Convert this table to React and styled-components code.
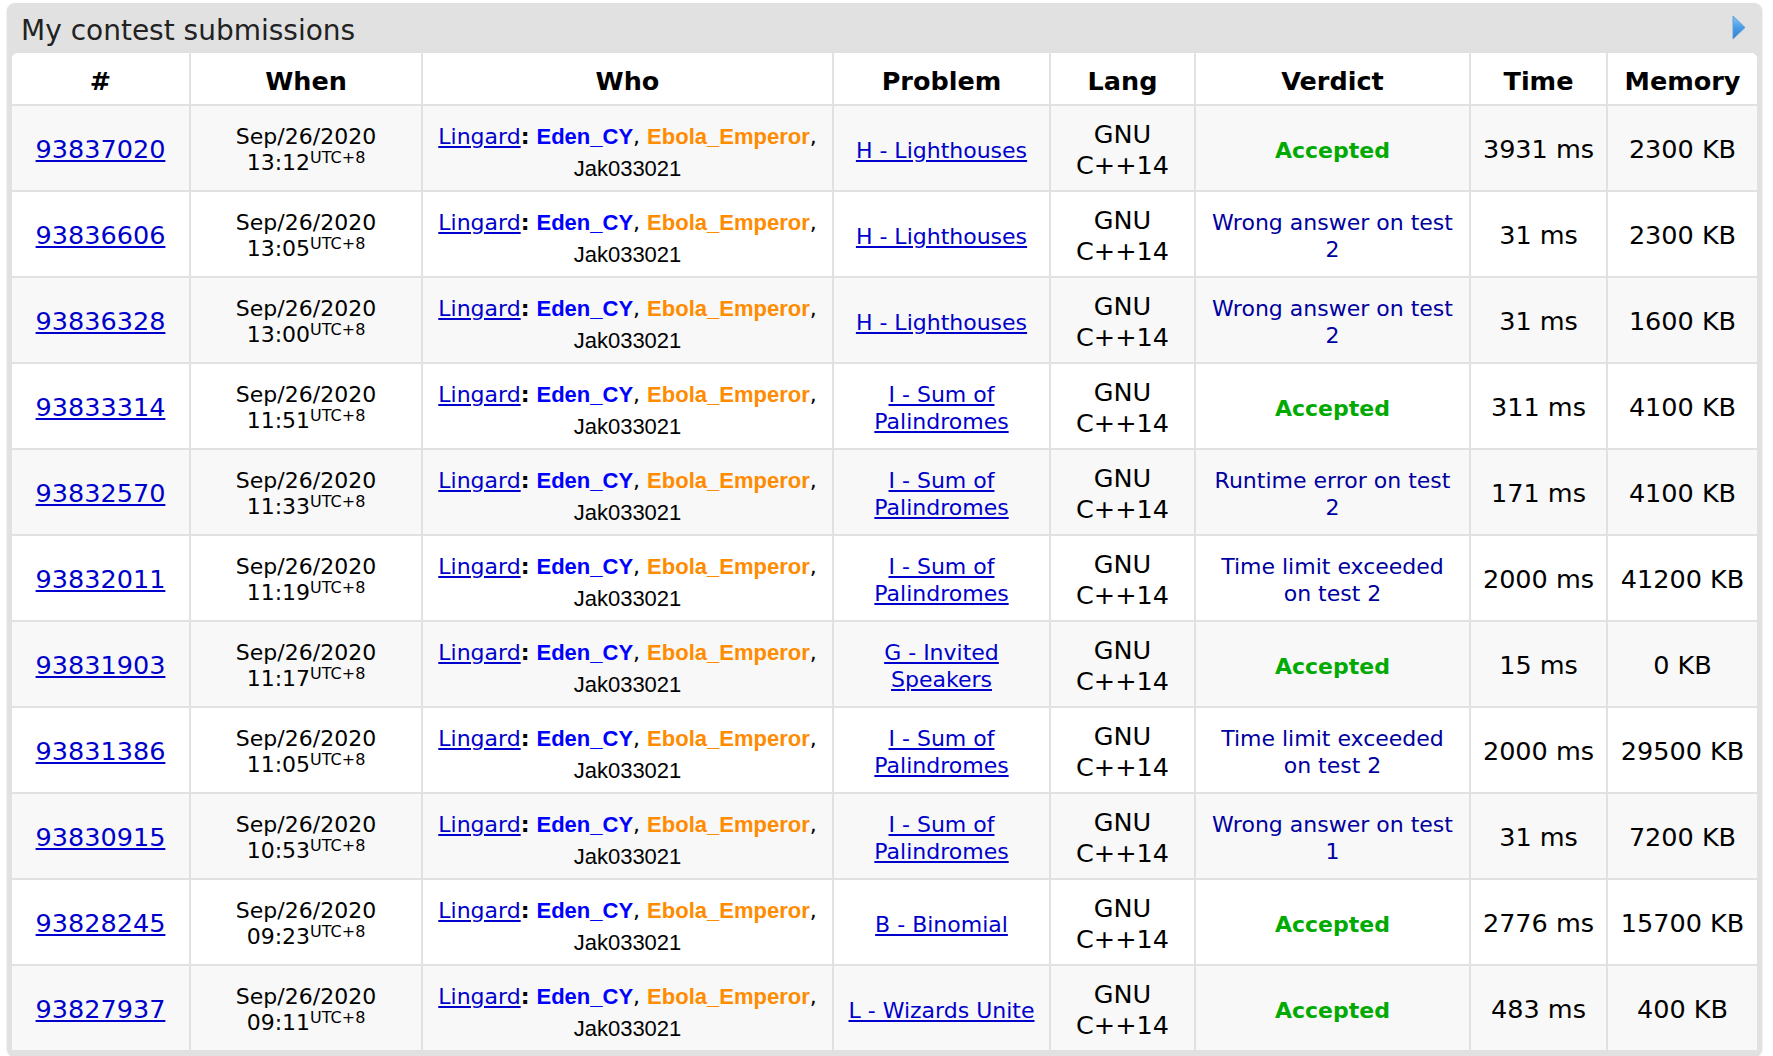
import React from "react";
import styled, { createGlobalStyle } from "styled-components";

const Global = createGlobalStyle`
  html, body { margin: 0; padding: 0; background: #fff; }
  body { font-family: "DejaVu Sans", Verdana, sans-serif; color: #000; }
`;

const Frame = styled.section`
  margin: 3px 11px 0 7px;
  padding: 0 5px 4px 5px;
  background: #e1e1e1;
  border-radius: 8px;
  box-shadow: 0 1px 2px rgba(0, 0, 0, 0.18);
`;

const TitleBar = styled.div`
  box-sizing: border-box;
  height: 50px;
  display: flex;
  align-items: center;
  justify-content: space-between;
  padding: 7px 11px 0 9px;
`;

const Title = styled.h1`
  margin: 0;
  font-size: 28px;
  font-weight: normal;
  color: #222;
  line-height: 1;
  padding-bottom: 2px;
`;

const Arrow = styled.svg`
  display: block;
  width: 14px;
  height: 25px;
  margin-bottom: 8px;
`;

const TableBox = styled.div`
  background: #fff;
  border-radius: 6px 6px 0 0;
  overflow: hidden;
`;

const Table = styled.table`
  width: 1745px;
  table-layout: fixed;
  border-collapse: separate;
  border-spacing: 0;
`;

const HeadCell = styled.th`
  box-sizing: border-box;
  width: ${(p) => p.$w}px;
  height: 53px;
  padding: 4px 10px 0;
  font-size: 25.5px;
  font-weight: bold;
  text-align: center;
  vertical-align: middle;
  border-right: ${(p) => (p.$last ? "0" : "2px solid #e1e1e1")};
  border-bottom: 2px solid #e1e1e1;
  background: #fff;
`;

const Row = styled.tr`
  background: ${(p) => (p.$odd ? "#f8f8f8" : "#fff")};
`;

const Cell = styled.td`
  box-sizing: border-box;
  height: 86px;
  padding: ${(p) => p.$top || 4}px 10px 0;
  text-align: center;
  vertical-align: middle;
  font-size: ${(p) => p.$size || 25.5}px;
  line-height: ${(p) => p.$lh || 31.5}px;
  border-right: ${(p) => (p.$last ? "0" : "2px solid #e1e1e1")};
  border-bottom: 2px solid #e1e1e1;
`;

const IdLink = styled.a`
  color: #0000cc;
  text-decoration: underline;
  font-size: 25.5px;
`;

const Sup = styled.sup`
  font-size: 16px;
  line-height: 0;
  vertical-align: 7px;
`;

const TeamLink = styled.a`
  color: #0000cc;
  text-decoration: underline;
`;

const Handle = styled.span`
  font-family: "Liberation Sans", Arial, Helvetica, sans-serif;
  font-weight: ${(p) => (p.$plain ? "normal" : "bold")};
  color: ${(p) => p.$color};
`;

const ProblemLink = styled.a`
  color: #0000cc;
  text-decoration: underline;
`;

const Verdict = styled.span`
  color: ${(p) => (p.$ok ? "#00aa00" : "#0000a0")};
  font-weight: ${(p) => (p.$ok ? "bold" : "normal")};
`;

const columns = [
  ["#", 179],
  ["When", 232],
  ["Who", 411],
  ["Problem", 217],
  ["Lang", 145],
  ["Verdict", 275],
  ["Time", 137],
  ["Memory", 149],
];

const rows = [
  ["93837020", "13:12", "H - Lighthouses", "Accepted", "3931 ms", "2300 KB"],
  ["93836606", "13:05", "H - Lighthouses", "Wrong answer on test 2", "31 ms", "2300 KB"],
  ["93836328", "13:00", "H - Lighthouses", "Wrong answer on test 2", "31 ms", "1600 KB"],
  ["93833314", "11:51", "I - Sum of Palindromes", "Accepted", "311 ms", "4100 KB"],
  ["93832570", "11:33", "I - Sum of Palindromes", "Runtime error on test 2", "171 ms", "4100 KB"],
  ["93832011", "11:19", "I - Sum of Palindromes", "Time limit exceeded on test 2", "2000 ms", "41200 KB"],
  ["93831903", "11:17", "G - Invited Speakers", "Accepted", "15 ms", "0 KB"],
  ["93831386", "11:05", "I - Sum of Palindromes", "Time limit exceeded on test 2", "2000 ms", "29500 KB"],
  ["93830915", "10:53", "I - Sum of Palindromes", "Wrong answer on test 1", "31 ms", "7200 KB"],
  ["93828245", "09:23", "B - Binomial", "Accepted", "2776 ms", "15700 KB"],
  ["93827937", "09:11", "L - Wizards Unite", "Accepted", "483 ms", "400 KB"],
];

export default function App() {
  return (
    <>
      <Global />
      <Frame>
        <TitleBar>
          <Title>My contest submissions</Title>
          <Arrow viewBox="0 0 14 25">
            <defs>
              <linearGradient id="arr" x1="0" y1="0" x2="0" y2="1">
                <stop offset="0" stopColor="#8cc8f6" />
                <stop offset="0.5" stopColor="#4a9be6" />
                <stop offset="1" stopColor="#2f7fd2" />
              </linearGradient>
            </defs>
            <polygon points="1,1 13,12.5 1,24" fill="url(#arr)" stroke="#5c9fdc" strokeWidth="1" />
          </Arrow>
        </TitleBar>
        <TableBox>
          <Table>
            <thead>
              <tr>
                {columns.map(([name, w], i) => (
                  <HeadCell key={name} $w={w} $last={i === columns.length - 1}>
                    {name}
                  </HeadCell>
                ))}
              </tr>
            </thead>
            <tbody>
              {rows.map(([id, time, problem, verdict, t, mem], i) => (
                <Row key={id} $odd={i % 2 === 0}>
                  <Cell>
                    <IdLink href="#">{id}</IdLink>
                  </Cell>
                  <Cell $size={22} $lh={26}>
                    Sep/26/2020
                    <br />
                    {time}
                    <Sup>UTC+8</Sup>
                  </Cell>
                  <Cell $size={22} $lh={31.5} $top={9}>
                    <TeamLink href="#">Lingard</TeamLink>
                    <b>:</b> <Handle $color="#0000ff">Eden_CY</Handle>,{" "}
                    <Handle $color="#ff8c00">Ebola_Emperor</Handle>,{" "}
                    <Handle $plain $color="#000">Jak033021</Handle>
                  </Cell>
                  <Cell $size={22} $lh={27}>
                    <ProblemLink href="#">{problem}</ProblemLink>
                  </Cell>
                  <Cell $lh={31.5}>GNU C++14</Cell>
                  <Cell $size={22} $lh={27}>
                    <Verdict $ok={verdict === "Accepted"}>{verdict}</Verdict>
                  </Cell>
                  <Cell>{t}</Cell>
                  <Cell $last>{mem}</Cell>
                </Row>
              ))}
            </tbody>
          </Table>
        </TableBox>
      </Frame>
    </>
  );
}
